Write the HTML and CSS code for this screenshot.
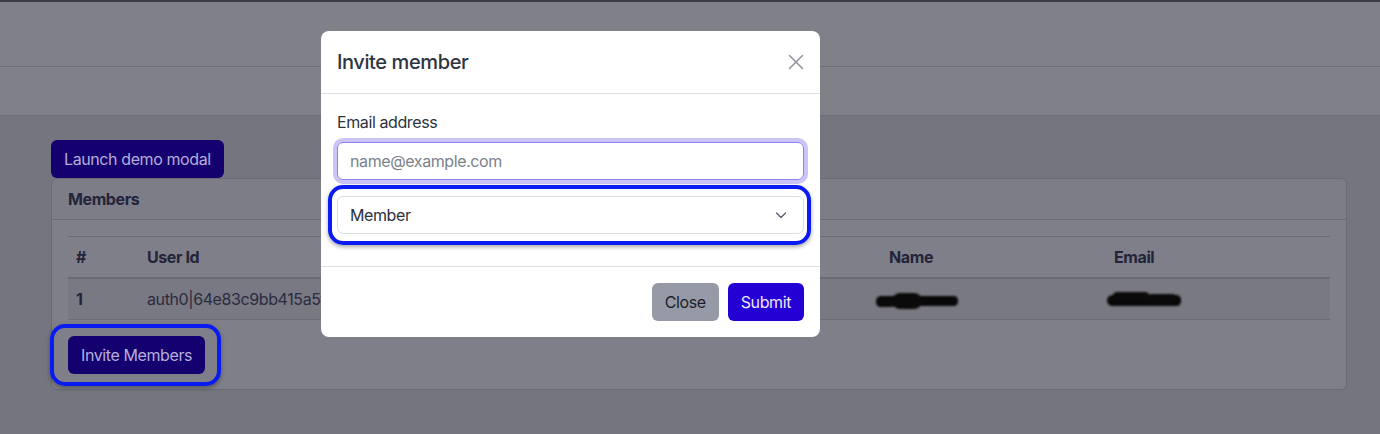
FILE: index.html
```html
<!DOCTYPE html>
<html lang="en">
<head>
<meta charset="utf-8">
<title>Members</title>
<link rel="stylesheet" href="styles.css">
</head>
<body>
<div class="topline"></div>
<div class="navbar"></div>
<div class="subbar"></div>
<main class="main">
  <button class="btn btn-dark-primary btn-launch">Launch demo modal</button>
  <section class="card">
    <div class="card-header">Members</div>
    <div class="card-body">
      <table class="table">
        <colgroup>
          <col class="c-num"><col class="c-user"><col class="c-role"><col class="c-name"><col class="c-email">
        </colgroup>
        <thead>
          <tr><th>#</th><th>User Id</th><th>Role</th><th>Name</th><th>Email</th></tr>
        </thead>
        <tbody>
          <tr class="striped">
            <th>1</th>
            <td>auth0|64e83c9bb415a5f1c2d3e4f5</td>
            <td>Owner</td>
            <td><span class="scribble scribble-name"></span></td>
            <td><span class="scribble scribble-email"></span></td>
          </tr>
        </tbody>
      </table>
      <div class="ring-wrap ring-invite">
        <button class="btn btn-dark-primary">Invite Members</button>
      </div>
    </div>
  </section>
</main>

<div class="modal">
  <div class="modal-header">
    <h5 class="modal-title">Invite member</h5>
    <button class="btn-close" aria-label="Close">
      <svg width="16" height="16" viewBox="0 0 16 16"><path d="M1.5 1.5 L14.5 14.5 M14.5 1.5 L1.5 14.5" stroke="#8e929c" stroke-width="1.5" stroke-linecap="round" fill="none"/></svg>
    </button>
  </div>
  <div class="modal-body">
    <label class="form-label">Email address</label>
    <div class="form-control focus"><span class="placeholder">name@example.com</span></div>
    <div class="ring-wrap ring-select">
      <div class="form-select">
        <span>Member</span>
        <svg class="chev" width="16" height="16" viewBox="0 0 16 16"><path d="M3.5 6 L8 10.5 L12.5 6" stroke="#565d6e" stroke-width="1.3" stroke-linecap="round" stroke-linejoin="round" fill="none"/></svg>
      </div>
    </div>
  </div>
  <div class="modal-footer">
    <button class="btn btn-secondary">Close</button>
    <button class="btn btn-primary">Submit</button>
  </div>
</div>
</body>
</html>
```

FILE: styles.css
```css
* { box-sizing: border-box; }
html, body { margin: 0; padding: 0; }
body {
  width: 1380px;
  height: 434px;
  overflow: hidden;
  background: #75757f;
  font-family: Inter, "Noto Sans", "Liberation Sans", sans-serif;
  font-size: 16px;
  line-height: 24px;
  letter-spacing: -0.025em;
  color: #23243a;
}
.topline { height: 2px; background: #3b3b41; }
.navbar { height: 65px; background: #808089; border-bottom: 1px solid #6d6d77; }
.subbar { height: 49px; background: #808089; border-bottom: 1px solid #6d6d77; }
.main { padding: 24px 33px 0 51px; }

.btn {
  font-family: inherit;
  font-size: 16px;
  line-height: 24px;
  letter-spacing: -0.025em;
  padding: 6px 12px;
  border: 1px solid transparent;
  border-radius: 6px;
  cursor: pointer;
  display: inline-block;
  white-space: nowrap;
  height: 38px;
}
.btn-dark-primary { background: #15006f; color: #b4aedb; }
.btn-launch { display: block; }

.card {
  border: 1px solid #6b6b75;
  border-radius: 6px;
  background: #7f7f89;
  height: 212px;
}
.card-header {
  padding: 8px 16px;
  height: 41px;
  font-weight: 700;
  border-bottom: 1px solid #6b6b75;
  background: #7d7d87;
  border-radius: 6px 6px 0 0;
}
.card-body { padding: 16px; }
.table { width: 100%; border-collapse: collapse; table-layout: fixed; }
.c-num { width: 71px; }
.c-user { width: 371px; }
.c-role { width: 371px; }
.c-name { width: 225px; }
.table th, .table td {
  text-align: left;
  padding: 8px;
  height: 41px;
  white-space: nowrap;
  overflow: visible;
}
.table thead tr { border-top: 1px solid #6b6b75; border-bottom: 2px solid #6a6a74; }
.table thead th { font-weight: 700; }
.table tbody tr { border-bottom: 1px solid #6b6b75; }
.striped { background: #797983; }
.table tbody td { color: #2a2b40; }

.scribble {
  display: inline-block;
  position: relative;
  height: 10px;
  background: #080808;
  border-radius: 6px 5px 5px 6px;
  filter: blur(0.8px);
  vertical-align: middle;
}
.scribble::before, .scribble::after {
  content: ""; position: absolute; background: #0a0a0a;
}
.scribble-name { width: 82px; margin-left: -13px; }
.scribble-name::before { left: 16px; top: -3px; width: 30px; height: 16px; border-radius: 9px; }
.scribble-name::after { left: 0; top: 2px; width: 20px; height: 9px; border-radius: 5px; }
.scribble-email { width: 74px; margin-left: -7px; height: 11px; }
.scribble-email::before { left: 6px; top: -3px; width: 36px; height: 8px; border-radius: 4px; }
.scribble-email::after { left: 40px; top: -1px; width: 30px; height: 9px; border-radius: 5px; }

.ring-wrap { position: relative; }
.ring-wrap::after {
  content: "";
  position: absolute;
  border: 4px solid #0a1bf2;
  border-radius: 15px;
  box-shadow: 0 2px 4px rgba(0,0,0,0.35);
  pointer-events: none;
}
.ring-invite { margin-top: 16px; display: inline-block; vertical-align: top; }
.ring-invite .btn { display: block; }
.ring-invite::after { left: -18px; right: -16px; top: -12px; bottom: -12px; }

.modal {
  position: absolute;
  left: 321px;
  top: 31px;
  width: 499px;
  background: #fff;
  border-radius: 8px;
  color: #2d3340;
}
.modal-header {
  display: flex;
  align-items: center;
  justify-content: space-between;
  padding: 16px;
  height: 63px;
  border-bottom: 1px solid #dcdfe4;
}
.modal-title { margin: 0; font-size: 20px; line-height: 30px; font-weight: 500; }
.btn-close { background: none; border: 0; padding: 0; width: 16px; height: 16px; display: flex; }
.modal-body { padding: 16px 16px 32px; }
.form-label { display: block; margin-bottom: 8px; }
.form-control {
  height: 38px;
  padding: 6px 12px;
  border: 1px solid #8c7ff0;
  border-radius: 6px;
  box-shadow: 0 0 0 4px #cbc4f6;
}
.placeholder { color: #7b818c; }
.ring-select { margin-top: 16px; }
.ring-select::after { left: -9px; right: -7px; top: -11px; bottom: -11px; }
.form-select {
  height: 38px;
  padding: 6px 12px;
  border: 1px solid #dadde2;
  border-radius: 6px;
  display: flex;
  align-items: center;
  justify-content: space-between;
  color: #2a303c;
}
.chev { display: block; margin-right: 2px; }
.modal-footer {
  display: flex;
  justify-content: flex-end;
  gap: 9px;
  padding: 16px;
  border-top: 1px solid #dcdfe4;
}
.btn-secondary { background: #969aa6; color: #1b1e28; }
.btn-primary { background: #2400d5; color: #ece8ff; }
```
